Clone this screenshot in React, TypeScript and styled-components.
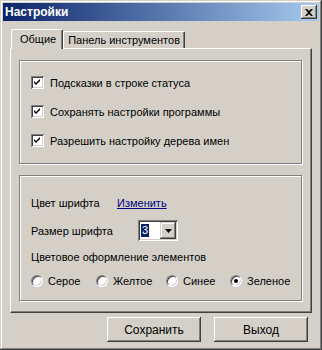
import React from 'react';
import styled, { createGlobalStyle } from 'styled-components';

const GlobalStyle = createGlobalStyle`
  html, body {
    margin: 0;
    padding: 0;
    background: #d4d0c8;
  }
  body {
    font-family: 'Liberation Sans', Arial, sans-serif;
    font-size: 11px;
    color: #000;
  }
`;

const raised = `
  box-shadow: inset -1px -1px #404040, inset 1px 1px #d4d0c8,
    inset -2px -2px #808080, inset 2px 2px #ffffff;
`;

const sunken = `
  box-shadow: inset 1px 1px #808080, inset -1px -1px #ffffff,
    inset 2px 2px #404040, inset -2px -2px #d4d0c8;
`;

const Window = styled.div`
  width: 322px;
  height: 350px;
  box-sizing: border-box;
  padding: 3px;
  background: #d4d0c8;
  display: flex;
  flex-direction: column;
  ${raised}
`;

const TitleBar = styled.div`
  height: 18px;
  display: flex;
  align-items: center;
  justify-content: space-between;
  padding: 0 2px 0 2px;
  background: linear-gradient(to right, #0a246a, #a6caf0);
  color: #fff;
  font-weight: bold;
  font-size: 12px;
`;

const CloseButton = styled.div`
  width: 16px;
  height: 14px;
  box-sizing: border-box;
  background: #d4d0c8;
  display: flex;
  align-items: center;
  justify-content: center;
  box-shadow: inset -1px -1px #404040, inset 1px 1px #ffffff,
    inset -2px -2px #808080;
`;

const Body = styled.div`
  flex: 1;
  display: flex;
  flex-direction: column;
  padding: 8px 6px 0 7px;
`;

const TabStrip = styled.div`
  display: flex;
  align-items: flex-end;
  height: 19px;
  padding-left: 1px;
  position: relative;
  z-index: 1;
`;

const Tab = styled.div<{ $active?: boolean }>`
  height: ${(p) => (p.$active ? 20 : 17)}px;
  margin-bottom: ${(p) => (p.$active ? -1 : 0)}px;
  box-sizing: border-box;
  padding: ${(p) => (p.$active ? '3px 6px 0 8px' : '2px 4px 0 4px')};
  background: #d4d0c8;
  border-top: 1px solid #fff;
  border-left: 1px solid #fff;
  border-right: 1px solid #404040;
  box-shadow: inset -1px 0 #808080;
  border-radius: 2px 2px 0 0;
  white-space: nowrap;
`;

const Panel = styled.div`
  height: 265px;
  width: 302px;
  box-sizing: border-box;
  padding: 11px 9px 0 8px;
  display: flex;
  flex-direction: column;
  gap: 11px;
  border-top: 1px solid #fff;
  border-left: 1px solid #fff;
  border-right: 1px solid #404040;
  border-bottom: 1px solid #404040;
  box-shadow: inset -1px -1px #808080;
`;

const GroupBox = styled.div<{ $h: number; $pt: number }>`
  height: ${(p) => p.$h}px;
  box-sizing: border-box;
  border: 1px solid #808080;
  box-shadow: inset 1px 1px #fff, 1px 1px #fff;
  padding: ${(p) => p.$pt}px 0 0 11px;
  display: flex;
  flex-direction: column;
`;

const CheckRow = styled.label`
  height: 29px;
  display: flex;
  align-items: center;
  gap: 6px;
`;

const CheckBox = styled.span`
  width: 13px;
  height: 13px;
  box-sizing: border-box;
  background: #fff;
  display: flex;
  align-items: center;
  justify-content: center;
  ${sunken}
`;

const Row = styled.div<{ $h: number }>`
  height: ${(p) => p.$h}px;
  display: flex;
  align-items: center;
`;

const Label = styled.span<{ $w?: number }>`
  width: ${(p) => (p.$w ? `${p.$w}px` : 'auto')};
`;

const Link = styled.span`
  color: #000080;
  text-decoration: underline;
`;

const Combo = styled.div`
  width: 40px;
  height: 21px;
  box-sizing: border-box;
  background: #fff;
  padding: 2px;
  display: flex;
  align-items: stretch;
  ${sunken}
`;

const ComboValue = styled.div`
  flex: 1;
  display: flex;
  align-items: center;
  padding-left: 1px;
  span {
    background: #0a246a;
    color: #fff;
    padding: 0 1px;
    line-height: 13px;
  }
`;

const ComboArrow = styled.div`
  width: 16px;
  background: #d4d0c8;
  display: flex;
  align-items: center;
  justify-content: center;
  box-shadow: inset -1px -1px #404040, inset 1px 1px #d4d0c8,
    inset -2px -2px #808080, inset 2px 2px #ffffff;
`;

const RadioRow = styled.div`
  height: 24px;
  display: flex;
  align-items: center;
`;

const RadioItem = styled.label<{ $w: number }>`
  width: ${(p) => p.$w}px;
  display: flex;
  align-items: center;
  gap: 5px;
`;

const Radio = styled.span<{ $on?: boolean }>`
  width: 12px;
  height: 12px;
  box-sizing: border-box;
  border-radius: 50%;
  background: #fff;
  border-top: 1px solid #808080;
  border-left: 1px solid #808080;
  border-right: 1px solid #fff;
  border-bottom: 1px solid #fff;
  box-shadow: inset 1px 1px #404040, inset -1px -1px #d4d0c8;
  display: flex;
  align-items: center;
  justify-content: center;
  &::after {
    content: '';
    width: 4px;
    height: 4px;
    border-radius: 50%;
    background: ${(p) => (p.$on ? '#000' : 'transparent')};
  }
`;

const Buttons = styled.div`
  display: flex;
  justify-content: flex-end;
  gap: 13px;
  padding: 4px 5px 0 0;
`;

const Button = styled.div`
  width: 94px;
  height: 25px;
  box-sizing: border-box;
  display: flex;
  align-items: center;
  justify-content: center;
  box-shadow: inset -1px -1px #404040, inset 1px 1px #ffffff,
    inset -2px -2px #808080, inset 2px 2px #d4d0c8;
  font-size: 12px;
`;

const Check = () => (
  <svg width="7" height="7" viewBox="0 0 7 7">
    <path d="M0 2 L2 4 L6 0 L6 2 L2 6 L0 4 Z" fill="#000" />
  </svg>
);

const checks = [
  'Подсказки в строке статуса',
  'Сохранять настройки программы',
  'Разрешить настройку дерева имен',
];

const colours = [
  { name: 'Серое', w: 65 },
  { name: 'Желтое', w: 70 },
  { name: 'Синее', w: 64 },
  { name: 'Зеленое', w: 70, on: true },
];

function App() {
  return (
    <>
      <GlobalStyle />
      <Window>
        <TitleBar>
          <span>Настройки</span>
          <CloseButton>
            <svg width="8" height="7" viewBox="0 0 8 7">
              <path d="M0 0 L2 0 L4 2 L6 0 L8 0 L5 3.5 L8 7 L6 7 L4 5 L2 7 L0 7 L3 3.5 Z" fill="#000" />
            </svg>
          </CloseButton>
        </TitleBar>
        <Body>
          <TabStrip>
            <Tab $active>Общие</Tab>
            <Tab>Панель инструментов</Tab>
          </TabStrip>
          <Panel>
            <GroupBox $h={104} $pt={7}>
              {checks.map((c) => (
                <CheckRow key={c}>
                  <CheckBox>
                    <Check />
                  </CheckBox>
                  {c}
                </CheckRow>
              ))}
            </GroupBox>
            <GroupBox $h={126} $pt={13}>
              <Row $h={27}>
                <Label $w={86}>Цвет шрифта</Label>
                <Link>Изменить</Link>
              </Row>
              <Row $h={29}>
                <Label $w={107}>Размер шрифта</Label>
                <Combo>
                  <ComboValue>
                    <span>3</span>
                  </ComboValue>
                  <ComboArrow>
                    <svg width="7" height="4" viewBox="0 0 7 4">
                      <path d="M0 0 L7 0 L3.5 4 Z" fill="#000" />
                    </svg>
                  </ComboArrow>
                </Combo>
              </Row>
              <Row $h={24}>
                <Label>Цветовое оформление элементов</Label>
              </Row>
              <RadioRow>
                {colours.map((c) => (
                  <RadioItem key={c.name} $w={c.w}>
                    <Radio $on={c.on} />
                    {c.name}
                  </RadioItem>
                ))}
              </RadioRow>
            </GroupBox>
          </Panel>
          <Buttons>
            <Button>Сохранить</Button>
            <Button>Выход</Button>
          </Buttons>
        </Body>
      </Window>
    </>
  );
}

export default App;
